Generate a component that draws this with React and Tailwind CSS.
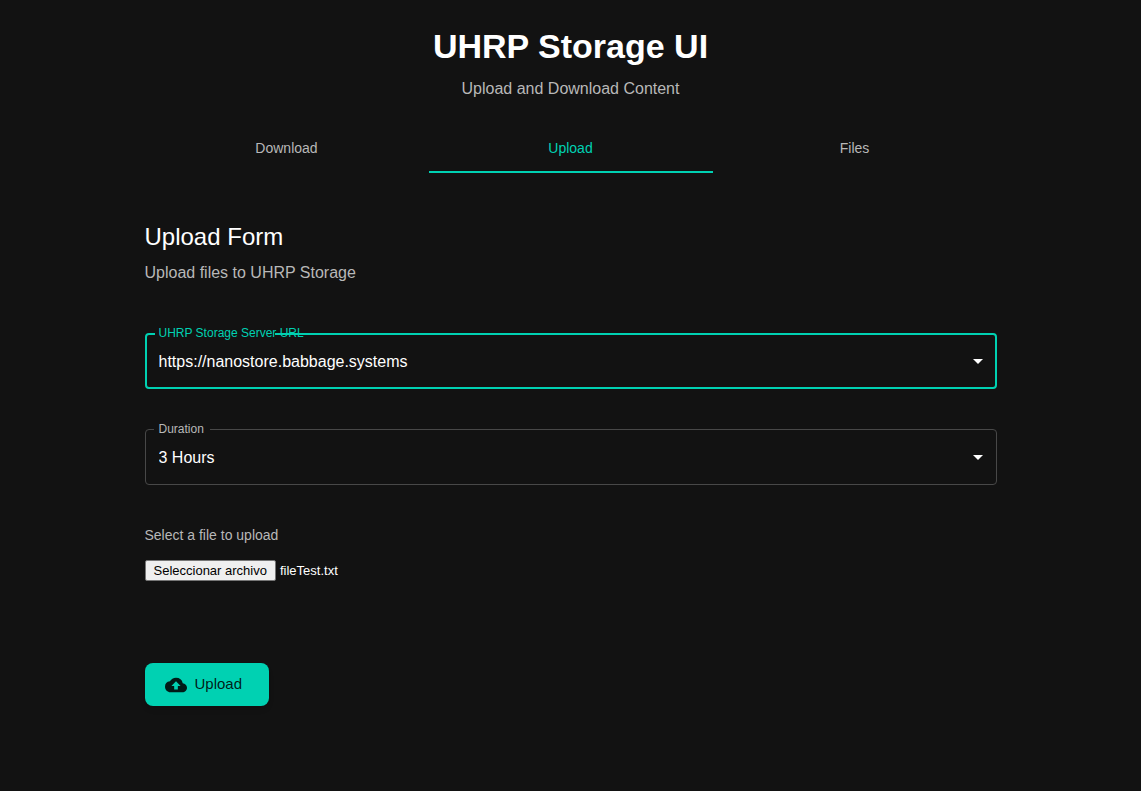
import { useState } from "react";
import { MdArrowDropDown, MdCloudUpload } from "react-icons/md";

const TABS = ["Download", "Upload", "Files"];

function OutlinedSelect({ id, label, options, highlighted, notchClass }) {
  return (
    <div className="relative h-14">
      <label
        htmlFor={id}
        className={`absolute -top-2 left-3.5 z-10 text-xs leading-4 ${
          highlighted ? "text-[#00d1b2]" : "text-[#b8b8b8]"
        }`}
      >
        {label}
      </label>
      <select
        id={id}
        className="h-full w-full cursor-pointer appearance-none bg-transparent pt-0.5 pr-8 pl-3.5 text-base text-white outline-none"
      >
        {options.map((option) => (
          <option key={option} className="bg-[#121212]">
            {option}
          </option>
        ))}
      </select>
      <MdArrowDropDown
        aria-hidden="true"
        className="pointer-events-none absolute top-4 right-[7px] h-6 w-6 text-white"
      />
      <fieldset
        aria-hidden="true"
        className={`pointer-events-none absolute -top-[5px] right-0 bottom-0 left-0 rounded px-2 ${
          highlighted ? "border-2 border-[#00d1b2]" : "border border-[#484848]"
        }`}
      >
        <legend className={`h-[11px] ${notchClass}`} />
      </fieldset>
    </div>
  );
}

export default function App() {
  const [tab, setTab] = useState("Upload");

  return (
    <div className="min-h-screen bg-[#121212] font-['Liberation_Sans',Arial,sans-serif] text-white">
      <main className="mx-auto max-w-[900px] px-6 py-[25px]">
        <header className="text-center">
          <h1 className="text-[34px] leading-[42px] font-bold">UHRP Storage UI</h1>
          <p className="mt-2.5 text-base leading-6 text-[#b8b8b8]">Upload and Download Content</p>
        </header>

        <div role="tablist" className="mt-6 grid grid-cols-3">
          {TABS.map((name) => (
            <button
              key={name}
              type="button"
              role="tab"
              aria-selected={tab === name}
              onClick={() => setTab(name)}
              className={`h-12 cursor-pointer border-b-2 text-sm ${
                tab === name
                  ? "border-[#00d1b2] text-[#00d1b2]"
                  : "border-transparent text-[#b8b8b8]"
              }`}
            >
              {name}
            </button>
          ))}
        </div>

        <form className="mt-12" onSubmit={(event) => event.preventDefault()}>
          <h2 className="text-2xl leading-8">Upload Form</h2>
          <p className="mt-2 text-base leading-6 text-[#b8b8b8]">Upload files to UHRP Storage</p>

          <div className="mt-12 flex flex-col gap-10">
            <OutlinedSelect
              id="server"
              label="UHRP Storage Server URL"
              options={["https://nanostore.babbage.systems"]}
              notchClass="w-[120px]"
              highlighted
            />
            <OutlinedSelect
              id="duration"
              label="Duration"
              options={["3 Hours", "1 Day", "1 Week", "1 Month"]}
              notchClass="w-14"
            />
          </div>

          <div className="mt-10">
            <label htmlFor="file" className="block text-sm leading-5 text-[#b8b8b8]">
              Select a file to upload
            </label>
            <div className="relative mt-[15px] flex items-center gap-1 text-[13px] leading-[15px]">
              <span className="rounded-xs border border-[#767676] bg-[#efefef] px-2 py-[2px] text-black">
                Seleccionar archivo
              </span>
              <span>fileTest.txt</span>
              <input id="file" type="file" className="absolute inset-0 cursor-pointer opacity-0" />
            </div>
          </div>

          <button
            type="submit"
            className="mt-[82px] flex h-[43px] min-w-[124px] cursor-pointer items-center gap-2 rounded-lg bg-[#00d1b2] pr-6 pl-5 text-[15px] text-black/87 shadow-md"
          >
            <MdCloudUpload aria-hidden="true" className="h-[22px] w-[22px]" />
            Upload
          </button>
        </form>
      </main>
    </div>
  );
}
